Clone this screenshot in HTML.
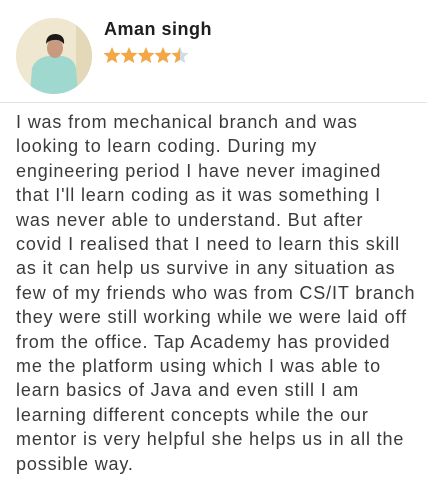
<!DOCTYPE html>
<html><head><style>
body{margin:0;width:427px;height:502px;background:#fff;font-family:"Liberation Sans",sans-serif;overflow:hidden;position:relative}
.av{position:absolute;left:16px;top:18px;width:76px;height:76px;border-radius:50%;background:#ece4cc;overflow:hidden}
.name{position:absolute;left:104px;top:19px;font-size:18px;font-weight:bold;color:#1e1e1e;letter-spacing:0.5px}
.stars{position:absolute;left:103px;top:46px}
.hr{position:absolute;left:0;top:102px;width:427px;height:1px;background:#dfe4ea}
.txt{position:absolute;left:16px;top:110px;font-size:18px;line-height:24.4px;color:#3a3a3a;letter-spacing:0.85px;white-space:nowrap}
</style></head><body>
<div class="av">
<svg width="76" height="76" viewBox="0 0 76 76">
<rect width="76" height="76" fill="#efe7cf"/>
<rect x="60" y="0" width="16" height="76" fill="#e3d9b8"/>
<path d="M14 76 L16 50 Q20 40 32 38 L46 38 Q58 40 60 50 L62 76Z" fill="#9fd8cf"/>
<ellipse cx="39" cy="30" rx="8" ry="10" fill="#c99a80"/>
<path d="M30 26 Q30 16 40 16 Q49 17 48 26 Q44 21 38 22 Q33 22 30 26Z" fill="#1c1a18"/>
</svg></div>
<div class="name">Aman singh</div>
<div class="stars"><svg width="92" height="20" viewBox="0 0 92 20">
<defs><path id="s" d="M9 1 L11.4 6.6 L17.5 7.1 L12.9 11.1 L14.3 17 L9 13.9 L3.7 17 L5.1 11.1 L0.5 7.1 L6.6 6.6Z"/>
<clipPath id="h"><rect x="0" y="0" width="9" height="20"/></clipPath></defs>
<use href="#s" x="0" fill="#f3a847"/><use href="#s" x="17" fill="#f3a847"/><use href="#s" x="34" fill="#f3a847"/><use href="#s" x="51" fill="#f3a847"/>
<use href="#s" x="68" fill="#cfdbe6"/>
<g clip-path="url(#h)" transform="translate(68 0)"><use href="#s" fill="#f3a847"/></g>
</svg></div>
<div class="hr"></div>
<div class="txt">I was from mechanical branch and was<br>looking to learn coding. During my<br>engineering period I have never imagined<br>that I'll learn coding as it was something I<br>was never able to understand. But after<br>covid I realised that I need to learn this skill<br>as it can help us survive in any situation as<br>few of my friends who was from CS/IT branch<br>they were still working while we were laid off<br>from the office. Tap Academy has provided<br>me the platform using which I was able to<br>learn basics of Java and even still I am<br>learning different concepts while the our<br>mentor is very helpful she helps us in all the<br>possible way.</div>
</body></html>
